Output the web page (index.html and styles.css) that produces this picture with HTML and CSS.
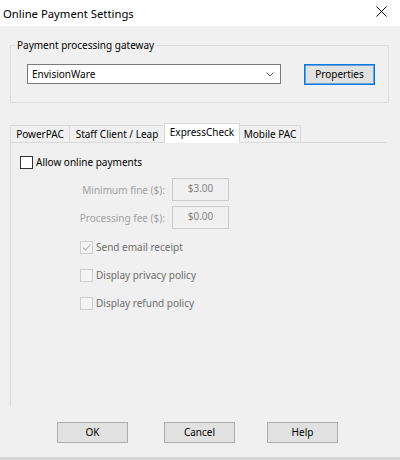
FILE: index.html
```html
<!DOCTYPE html>
<html>
<head>
<meta charset="utf-8">
<title>Online Payment Settings</title>
<link rel="stylesheet" href="styles.css">
</head>
<body>
<div class="window">
  <div class="titlebar">
    <span class="title">Online Payment Settings</span>
    <svg class="close" width="11" height="11" viewBox="0 0 11 11"><path d="M0.5 0.5 L10.5 10.5 M10.5 0.5 L0.5 10.5" stroke="#000" stroke-width="1" fill="none"/></svg>
  </div>
  <div class="content">
    <fieldset class="group">
      <legend>Payment processing gateway</legend>
      <div class="gw-row">
        <div class="select">
          <span>EnvisionWare</span>
          <svg class="chev" width="8" height="5" viewBox="0 0 8 5"><path d="M0.5 0.5 L4 4 L7.5 0.5" stroke="#5a5a5a" stroke-width="1" fill="none"/></svg>
        </div>
        <button class="btn btn-default">Properties</button>
      </div>
    </fieldset>

    <div class="tabs">
      <div class="tab tab-powerpac">PowerPAC</div>
      <div class="tab tab-staff">Staff Client / Leap</div>
      <div class="tab tab-express tab-active">ExpressCheck</div>
      <div class="tab tab-mobile">Mobile PAC</div>
    </div>
    <div class="panel">
      <div class="check check-main"><span class="box"></span><span>Allow online payments</span></div>
      <div class="field-row first"><span class="field-label">Minimum fine ($):</span><span class="field">$3.00</span></div>
      <div class="field-row"><span class="field-label">Processing fee ($):</span><span class="field">$0.00</span></div>
      <div class="subchecks">
        <div class="check disabled"><span class="box"><svg width="11" height="11" viewBox="0 0 11 11"><path d="M2 5.5 L4.5 8 L9.5 2.5" stroke="#b0b0b0" stroke-width="1.1" fill="none"/></svg></span><span>Send email receipt</span></div>
        <div class="check disabled"><span class="box"></span><span>Display privacy policy</span></div>
        <div class="check disabled"><span class="box"></span><span>Display refund policy</span></div>
      </div>
    </div>

    <div class="footer">
      <button class="btn">OK</button>
      <button class="btn btn-cancel">Cancel</button>
      <button class="btn btn-help">Help</button>
    </div>
  </div>
</div>
</body>
</html>
```

FILE: styles.css
```css
* { box-sizing: border-box; }

html, body {
  margin: 0;
  padding: 0;
}

body {
  width: 400px;
  height: 460px;
  overflow: hidden;
  background: #f0f0f0;
  font-family: "Noto Sans", "Open Sans", sans-serif;
  font-size: 10px;
  color: #000;
}

.window {
  height: 460px;
  background: #f0f0f0;
  border-bottom: 3px solid #d6d6d6;
}

.titlebar {
  height: 26px;
  background: #ffffff;
  display: flex;
  align-items: center;
  justify-content: space-between;
  padding: 0 13px 0 3px;
}

.title {
  font-size: 11.3px;
  line-height: 16px;
  margin-top: 1px;
}

.close {
  display: block;
  margin-top: -3px;
}

/* Group box */
.group {
  margin: 11px 11px 0 10px;
  padding: 0;
  border: 1px solid #dcdcdc;
  min-width: 0;
}

.group legend {
  padding: 0 2px;
  margin-left: 4px;
  line-height: 16px;
  font-size: 10px;
}

.gw-row {
  display: flex;
  align-items: flex-start;
  padding: 11px 12px 17px 16px;
}

.select {
  width: 254px;
  height: 20px;
  background: #fff;
  border: 1px solid #7a7a7a;
  display: flex;
  align-items: center;
  justify-content: space-between;
  padding: 0 6px 0 4px;
  line-height: 16px;
}

.chev { display: block; }

.btn {
  font-family: inherit;
  font-size: 10px;
  color: #000;
  width: 71px;
  height: 21px;
  padding: 0;
  background: #e1e1e1;
  border: 1px solid #adadad;
  line-height: 17px;
}

.btn-default {
  margin-left: 23px;
  border: 1px solid #0078d7;
  box-shadow: inset 0 0 0 1px #5ea5e6;
}

/* Tabs */
.tabs {
  display: flex;
  align-items: flex-end;
  height: 20px;
  margin: 20px 0 0 10px;
}

.tab {
  height: 17px;
  margin-bottom: 1px;
  padding: 0;
  border: 1px solid #d9d9d9;
  border-bottom: none;
  background: #f0f0f0;
  line-height: 16px;
  text-align: center;
  white-space: nowrap;
}

.tab + .tab { margin-left: -1px; }

.tab-powerpac { width: 60px; }
.tab-staff { width: 96px; }
.tab-express { width: 76px; }
.tab-mobile { width: 62px; }

.tab-active {
  position: relative;
  z-index: 1;
  height: 20px;
  margin-bottom: 0;
  background: #ffffff;
  line-height: 17px;
  padding-bottom: 2px;
}

.panel {
  margin: -1px 13px 0 10px;
  height: 265px;
  border-top: 1px solid #d9d9d9;
  border-left: 1px solid #d9d9d9;
  padding-left: 9px;
}

.check {
  display: flex;
  align-items: center;
  height: 15px;
  line-height: 15px;
}

.check .box {
  width: 13px;
  height: 13px;
  border: 1px solid #333333;
  background: #ffffff;
  margin-right: 3px;
  flex: none;
  display: flex;
  align-items: center;
  justify-content: center;
}

.check-main {
  margin-top: 12px;
}

.field-row {
  display: flex;
  align-items: center;
  margin-top: 5px;
}

.field-row.first { margin-top: 8px; }

.field-label {
  width: 145px;
  text-align: right;
  margin-right: 7px;
  color: #a0a0a0;
}

.field {
  width: 57px;
  height: 23px;
  border: 1px solid #cccccc;
  background: #f0f0f0;
  color: #838383;
  text-align: center;
  line-height: 18px;
}

.subchecks {
  margin: 11px 0 0 60px;
}

.subchecks .check + .check { margin-top: 13px; }

.check.disabled { color: #6d6d6d; }

.check.disabled .box {
  border-color: #cccccc;
  background: #f4f4f4;
}

.check.disabled .box svg { display: block; }

.footer {
  display: flex;
  margin-top: 15px;
  padding-left: 57px;
}

.btn-cancel { margin-left: 36px; }
.btn-help { margin-left: 32px; }
```
